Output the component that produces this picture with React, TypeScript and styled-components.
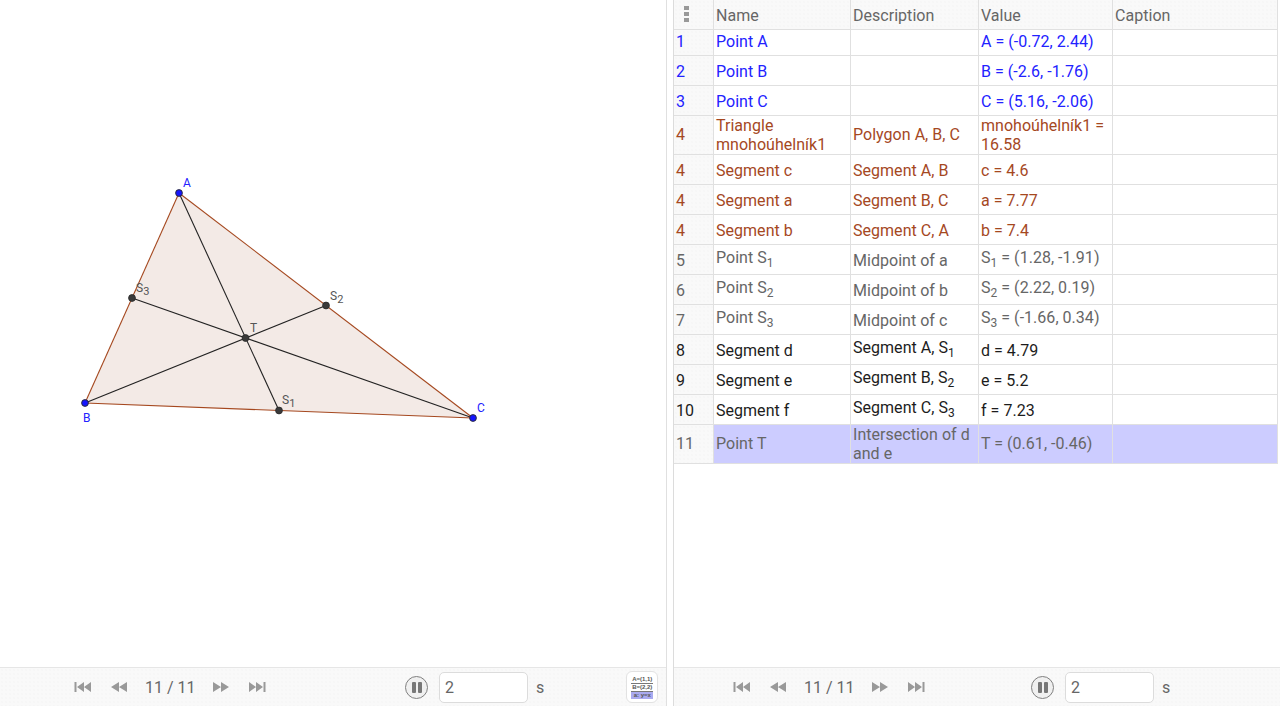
import React from 'react'
import styled, {createGlobalStyle} from 'styled-components'

const GlobalStyle = createGlobalStyle`
  html, body {
    margin: 0;
    height: 100%;
    background: #fff;
    overflow: hidden;
  }
  body {
    font-family: Roboto, "Liberation Sans", sans-serif;
  }
`

const dots = `
  background-color: #f9f9f9;
  background-image: radial-gradient(#f2f2f2 0.6px, transparent 0.8px);
  background-size: 4px 4px;
`

const Page = styled.div`
  display: flex;
  width: 1280px;
  height: 707px;
`
const Panel = styled.section<{$width: number}>`
  display: flex;
  flex-direction: column;
  width: ${p => p.$width}px;
  height: 706px;
`
const Divider = styled.div`
  width: 6px;
  height: 706px;
  border-left: 1px solid #e0e0e0;
  border-right: 1px solid #dcdcdc;
  box-sizing: content-box;
  flex: none;
`
const Canvas = styled.div`
  flex: 1;
  min-height: 0;
`
const Sheet = styled.div`
  flex: 1;
  min-height: 0;
`
const Table = styled.table`
  table-layout: fixed;
  width: 604px;
  border-collapse: separate;
  border-spacing: 0;
  font-size: 16px;
  line-height: 19px;
  letter-spacing: 0.03px;
`
const HeadCell = styled.th`
  ${dots}
  height: 30px;
  box-sizing: border-box;
  padding: 1px 2px 0;
  border-right: 1px solid #e0e0e0;
  border-bottom: 1px solid #e0e0e0;
  font-weight: 400;
  text-align: left;
  color: #666;
  vertical-align: middle;
`
const Row = styled.tr<{$height: number}>`
  height: ${p => p.$height}px;
`
const Cell = styled.td<{$tone: string; $selected?: boolean; $index?: boolean; $first?: boolean; $tall?: boolean}>`
  box-sizing: border-box;
  padding: ${p => (p.$first ? '0 2px 2px' : p.$tall ? '1px 2px 0' : '2px 2px 0')};
  border-right: 1px solid #e0e0e0;
  border-bottom: 1px solid #e0e0e0;
  vertical-align: middle;
  line-height: ${p => (p.$tall ? '18.5px' : '19px')};
  color: ${p => p.$tone};
  background: ${p => (p.$selected ? '#ccccff' : '#fff')};
  ${p => (p.$index ? dots : '')}
  sub {
    font-size: 12px;
    line-height: 19px;
    vertical-align: -4px;
  }
`
const MenuDots = styled.span`
  display: flex;
  flex-direction: column;
  gap: 2px;
  width: 5px;
  margin: -3px 0 0 8px;
  i {
    display: block;
    width: 5px;
    height: 4px;
    background: #999;
  }
`
const Footer = styled.footer<{$left: number}>`
  ${dots}
  display: flex;
  align-items: center;
  flex: none;
  height: 38px;
  padding-left: ${p => p.$left}px;
  border-top: 1px solid #e6e6e6;
  font-size: 16px;
  color: #666;
`
const Nav = styled.nav`
  display: flex;
  align-items: center;
  gap: 18px;
  flex: none;
`
const Counter = styled.span`
  width: 50px;
  margin: 0 -1px;
  text-align: center;
  white-space: nowrap;
`
const Speed = styled.div<{$gap: number}>`
  display: flex;
  align-items: center;
  margin-left: ${p => p.$gap}px;
  flex: none;
`
const PauseButton = styled.button`
  display: flex;
  align-items: center;
  justify-content: center;
  gap: 2px;
  width: 23px;
  height: 23px;
  padding: 0;
  border: 1.5px solid #808080;
  border-radius: 50%;
  background: #f0f0f0;
  i {
    display: block;
    width: 4px;
    height: 11px;
    border-radius: 1px;
    background: #777;
  }
`
const SpeedInput = styled.input`
  box-sizing: border-box;
  width: 89px;
  height: 31px;
  margin-left: 11px;
  padding: 0 5px;
  border: 1px solid #dcdcdc;
  border-radius: 5px;
  background: #fff;
  color: #666;
  font: 16px Roboto, "Liberation Sans", sans-serif;
`
const Unit = styled.span`
  margin-left: 8px;
`
const AlgebraToggle = styled.button`
  display: flex;
  flex-direction: column;
  align-items: center;
  box-sizing: border-box;
  width: 32px;
  height: 32px;
  margin-left: 82px;
  padding: 4px 0 0;
  border: 1px solid #e2e2e2;
  border-radius: 6px;
  background: #fff;
  color: #555;
  font: 700 6px/7px "Liberation Sans", sans-serif;
`
const ToggleLine = styled.span<{$active?: boolean}>`
  width: 22px;
  white-space: nowrap;
  overflow: hidden;
  text-align: center;
  background: ${p => (p.$active ? '#aaaaf0' : 'transparent')};
  border-bottom: ${p => (p.$active ? 'none' : '1px solid #777')};
`

const BLUE = '#2222ff'
const BROWN = '#a5481f'
const GREY = '#666666'
const BLACK = '#1c1c1c'

const S = ({n}: {n: number}) => <>S<sub>{n}</sub></>

const rows = [
  {n: 1, h: 26, tone: BLUE, name: 'Point A', desc: '', value: 'A = (-0.72, 2.44)'},
  {n: 2, h: 30, tone: BLUE, name: 'Point B', desc: '', value: 'B = (-2.6, -1.76)'},
  {n: 3, h: 30, tone: BLUE, name: 'Point C', desc: '', value: 'C = (5.16, -2.06)'},
  {n: 4, h: 39, tone: BROWN, name: 'Triangle mnohoúhelník1', desc: 'Polygon A, B, C', value: 'mnohoúhelník1 = 16.58'},
  {n: 4, h: 30, tone: BROWN, name: 'Segment c', desc: 'Segment A, B', value: 'c = 4.6'},
  {n: 4, h: 30, tone: BROWN, name: 'Segment a', desc: 'Segment B, C', value: 'a = 7.77'},
  {n: 4, h: 30, tone: BROWN, name: 'Segment b', desc: 'Segment C, A', value: 'b = 7.4'},
  {n: 5, h: 30, tone: GREY, name: <>Point <S n={1} /></>, desc: 'Midpoint of a', value: <><S n={1} /> = (1.28, -1.91)</>},
  {n: 6, h: 30, tone: GREY, name: <>Point <S n={2} /></>, desc: 'Midpoint of b', value: <><S n={2} /> = (2.22, 0.19)</>},
  {n: 7, h: 30, tone: GREY, name: <>Point <S n={3} /></>, desc: 'Midpoint of c', value: <><S n={3} /> = (-1.66, 0.34)</>},
  {n: 8, h: 30, tone: BLACK, name: 'Segment d', desc: <>Segment A, <S n={1} /></>, value: 'd = 4.79'},
  {n: 9, h: 30, tone: BLACK, name: 'Segment e', desc: <>Segment B, <S n={2} /></>, value: 'e = 5.2'},
  {n: 10, h: 30, tone: BLACK, name: 'Segment f', desc: <>Segment C, <S n={3} /></>, value: 'f = 7.23'},
  {n: 11, h: 39, tone: GREY, name: 'Point T', desc: 'Intersection of d and e', value: 'T = (0.61, -0.46)', selected: true},
]

const A = [179, 193]
const B = [85, 403]
const C = [473, 418]
const S1 = [279, 410.5]
const S2 = [326, 305.5]
const S3 = [132, 298]
const T = [245.5, 338]

const Segment = ({from, to, color}: {from: number[]; to: number[]; color: string}) => (
  <line x1={from[0]} y1={from[1]} x2={to[0]} y2={to[1]} stroke={color} strokeWidth={1.1} />
)
const Dot = ({at, color}: {at: number[]; color: string}) => (
  <circle cx={at[0]} cy={at[1]} r={3.4} fill={color} stroke="#2b2b2b" strokeWidth={0.9} />
)
const Label = ({x, y, color = '#555', sub, children}: {x: number; y: number; color?: string; sub?: number; children: string}) => (
  <text x={x} y={y} fill={color} fontSize={12} fontFamily="Roboto, sans-serif">
    {children}
    {sub && <tspan fontSize={11} dy={3}>{sub}</tspan>}
  </text>
)

const Figure = () => (
  <svg width="666" height="667" viewBox="0 0 666 667">
    <polygon points={[A, B, C].map(p => p.join(',')).join(' ')} fill="#f3eae6" />
    <Segment from={A} to={S1} color="#222" />
    <Segment from={B} to={S2} color="#222" />
    <Segment from={C} to={S3} color="#222" />
    <Segment from={A} to={B} color={BROWN} />
    <Segment from={B} to={C} color={BROWN} />
    <Segment from={C} to={A} color={BROWN} />
    <Dot at={S1} color="#3a3a3a" />
    <Dot at={S2} color="#3a3a3a" />
    <Dot at={S3} color="#3a3a3a" />
    <Dot at={T} color="#3a3a3a" />
    <Dot at={A} color="#1515ff" />
    <Dot at={B} color="#1515ff" />
    <Dot at={C} color="#1515ff" />
    <Label x={183} y={187} color={BLUE}>A</Label>
    <Label x={83} y={422} color={BLUE}>B</Label>
    <Label x={477} y={412} color={BLUE}>C</Label>
    <Label x={250} y={332}>T</Label>
    <Label x={282} y={404} sub={1}>S</Label>
    <Label x={330} y={300} sub={2}>S</Label>
    <Label x={136} y={292} sub={3}>S</Label>
  </svg>
)

const Skip = ({path}: {path: string}) => (
  <svg width="18" height="12" viewBox="0 0 18 12" fill="#999">
    <path d={path} />
  </svg>
)
const FIRST = 'M0.5 1h2v10h-2zM3 6l7-5v10zM10 6l7-5v10z'
const PREV = 'M1 6l8-5v10zM9 6l8-5v10z'
const NEXT = 'M1 1l8 5-8 5zM9 1l8 5-8 5z'
const LAST = 'M1 1l7 5-7 5zM8 1l7 5-7 5zM15.5 1h2v10h-2z'

const Controls = ({left, gap, algebra}: {left: number; gap: number; algebra?: boolean}) => (
  <Footer $left={left}>
    <Nav>
      <Skip path={FIRST} />
      <Skip path={PREV} />
      <Counter>11 / 11</Counter>
      <Skip path={NEXT} />
      <Skip path={LAST} />
    </Nav>
    <Speed $gap={gap}>
      <PauseButton><i /><i /></PauseButton>
      <SpeedInput defaultValue="2" />
      <Unit>s</Unit>
    </Speed>
    {algebra && (
      <AlgebraToggle>
        <ToggleLine>A=(1,1)</ToggleLine>
        <ToggleLine>B=(2,2)</ToggleLine>
        <ToggleLine $active>a: y=x</ToggleLine>
      </AlgebraToggle>
    )}
  </Footer>
)

const App: React.FC = () => (
  <Page>
    <GlobalStyle />
    <Panel $width={666}>
      <Canvas><Figure /></Canvas>
      <Controls left={74} gap={139} algebra />
    </Panel>
    <Divider />
    <Panel $width={606}>
      <Sheet>
        <Table>
          <colgroup>
            <col width={40} />
            <col width={137} />
            <col width={128} />
            <col width={134} />
            <col width={165} />
          </colgroup>
          <thead>
            <tr>
              <HeadCell><MenuDots><i /><i /><i /></MenuDots></HeadCell>
              <HeadCell>Name</HeadCell>
              <HeadCell>Description</HeadCell>
              <HeadCell>Value</HeadCell>
              <HeadCell>Caption</HeadCell>
            </tr>
          </thead>
          <tbody>
            {rows.map((r, i) => {
              const shared = {$tone: r.tone, $first: i === 0, $tall: r.h === 39}
              return (
                <Row key={i} $height={r.h}>
                  <Cell {...shared} $index>{r.n}</Cell>
                  <Cell {...shared} $selected={r.selected}>{r.name}</Cell>
                  <Cell {...shared} $selected={r.selected}>{r.desc}</Cell>
                  <Cell {...shared} $selected={r.selected}>{r.value}</Cell>
                  <Cell {...shared} $selected={r.selected} />
                </Row>
              )
            })}
          </tbody>
        </Table>
      </Sheet>
      <Controls left={59} gap={106} />
    </Panel>
  </Page>
)

export default App
